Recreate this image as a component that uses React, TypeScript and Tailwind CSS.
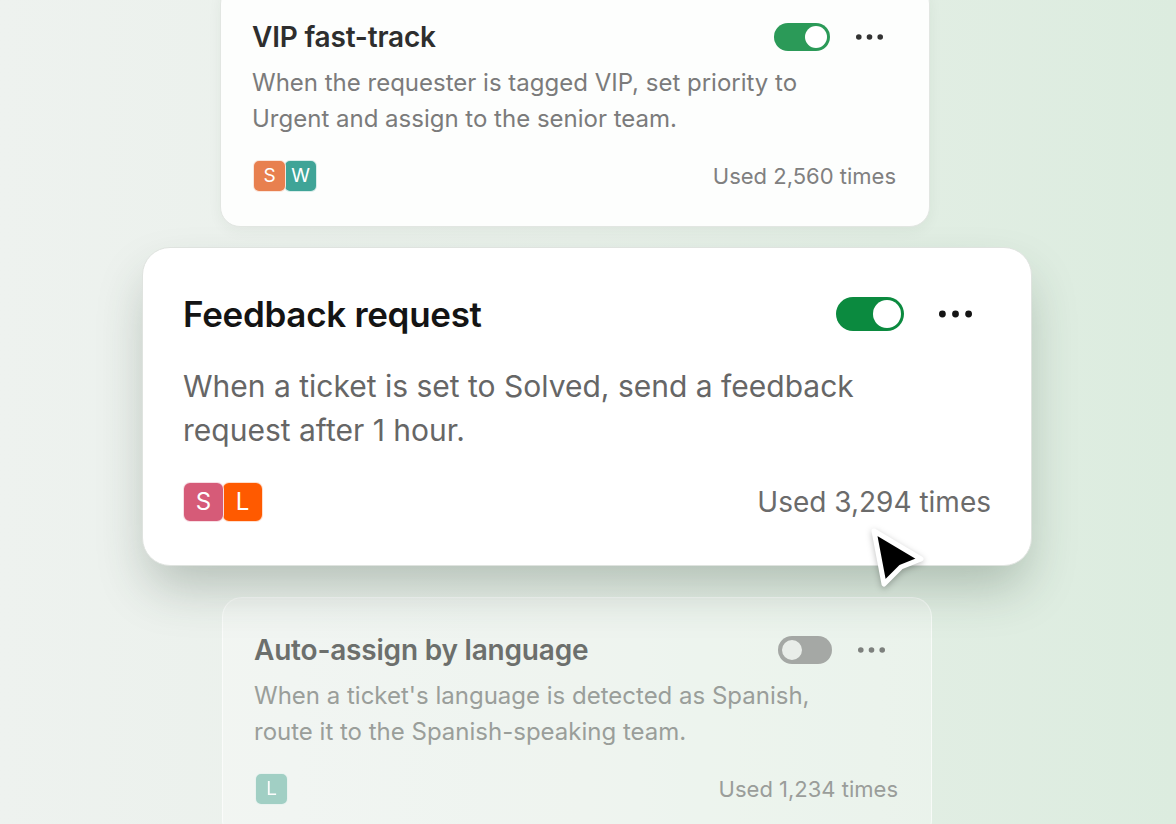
import React from 'react';

type Avatar = { letter: string; color: string };

type Rule = {
      title: string;
      description: string;
      avatars: Avatar[];
      uses: string;
      enabled: boolean;
};

const rules: Record<'vip' | 'feedback' | 'language', Rule> = {
      vip: {
            title: 'VIP fast-track',
            description: 'When the requester is tagged VIP, set priority to Urgent and assign to the senior team.',
            avatars: [
                  { letter: 'S', color: 'bg-[#e8804f]' },
                  { letter: 'W', color: 'bg-[#3fa497]' },
            ],
            uses: 'Used 2,560 times',
            enabled: true,
      },
      feedback: {
            title: 'Feedback request',
            description: 'When a ticket is set to Solved, send a feedback request after 1 hour.',
            avatars: [
                  { letter: 'S', color: 'bg-[#d65b78]' },
                  { letter: 'L', color: 'bg-[#ff5a00]' },
            ],
            uses: 'Used 3,294 times',
            enabled: true,
      },
      language: {
            title: 'Auto-assign by language',
            description: "When a ticket's language is detected as Spanish, route it to the Spanish-speaking team.",
            avatars: [{ letter: 'L', color: 'bg-[#80bfb1]' }],
            uses: 'Used 1,234 times',
            enabled: false,
      },
};

function Dots({ className, size }: { className: string; size: 'sm' | 'lg' }) {
      const w = size === 'lg' ? 33 : 27;
      const r = size === 'lg' ? 3.4 : 2.8;
      return (
            <svg width={w} height={10} viewBox={`0 0 ${w} 10`} className={className}>
                  <circle cx={r} cy={5} r={r} fill="currentColor" />
                  <circle cx={w / 2} cy={5} r={r} fill="currentColor" />
                  <circle cx={w - r} cy={5} r={r} fill="currentColor" />
            </svg>
      );
}

// Compact card used for the rules above and below the focused one
function SmallCard({ rule, muted }: { rule: Rule; muted?: boolean }) {
      return (
            <div
                  className={
                        muted
                              ? 'rounded-[20px] border border-white/60 bg-white/30 pl-[31px] pr-[33px] pt-[34px] pb-[34px]'
                              : 'rounded-[20px] border border-[#e2e6e2] bg-[#fdfefd] pl-[31px] pr-[33px] pt-[34px] pb-[34px] shadow-[0_4px_14px_rgba(40,60,45,0.05)]'
                  }
            >
                  <div className="flex h-[36px] items-center">
                        <h3
                              className={`flex-1 text-[28px] leading-[36px] font-semibold tracking-[-0.2px] ${muted ? 'text-[#6c6f6c]' : 'text-[#2e2e2e]'}`}
                        >
                              {rule.title}
                        </h3>
                        {rule.enabled ? (
                              <div className="flex h-[28px] w-[56px] items-center justify-end rounded-full bg-[#2b9a58] px-[3px]">
                                    <div className="h-[22px] w-[22px] rounded-full bg-white" />
                              </div>
                        ) : (
                              <div className="flex h-[28px] w-[54px] items-center justify-start rounded-full bg-[#a5a8a5] px-[2px]">
                                    <div className="h-[24px] w-[24px] rounded-full border-[2px] border-[#a5a8a5] bg-[#e9ede9]" />
                              </div>
                        )}
                        <Dots size="sm" className={`ml-[26px] mr-[13px] ${muted ? 'text-[#7d807d]' : 'text-[#333333]'}`} />
                  </div>
                  <p
                        className={`mt-[10px] w-[580px] text-[24px] leading-[36px] ${muted ? 'text-[#9a9e9a]' : 'text-[#7b7b7b]'}`}
                  >
                        {rule.description}
                  </p>
                  <div className="mt-[23px] flex h-[32px] items-center justify-between">
                        <div className={`ml-[1px] flex ${muted ? 'opacity-70' : ''}`}>
                              {rule.avatars.map((a, i) => (
                                    <div
                                          key={a.letter}
                                          className={`flex h-[32px] w-[33px] items-center justify-center rounded-[6px] border border-white/80 text-[19px] text-white ${a.color} ${i > 0 ? '-ml-[2px]' : 'relative z-10'}`}
                                    >
                                          {a.letter}
                                    </div>
                              ))}
                        </div>
                        <span className={`text-[22px] ${muted ? 'text-[#9a9d9a]' : 'text-[#808080]'}`}>{rule.uses}</span>
                  </div>
            </div>
      );
}

// Focused card, drawn larger and lifted above the others
function FocusCard({ rule }: { rule: Rule }) {
      return (
            <div className="relative rounded-[28px] border border-[#dfe3df] bg-white pl-[40px] pr-[40px] pt-[44px] pb-[43px] shadow-[0_26px_50px_-6px_rgba(40,65,48,0.28)]">
                  <div className="flex h-[44px] items-center">
                        <h2 className="flex-1 text-[35px] leading-[44px] font-semibold tracking-[-0.3px] text-[#141414]">
                              {rule.title}
                        </h2>
                        <div className="flex h-[34px] w-[68px] items-center justify-end rounded-full bg-[#0b8a3f] px-[3px]">
                              <div className="h-[28px] w-[28px] rounded-full bg-white" />
                        </div>
                        <Dots size="lg" className="ml-[35px] mr-[19px] text-[#141414]" />
                  </div>
                  <p className="mt-[28px] w-[720px] text-[30px] leading-[44px] text-[#666666]">{rule.description}</p>
                  <div className="mt-[30px] flex h-[40px] items-center justify-between">
                        <div className="flex">
                              {rule.avatars.map((a, i) => (
                                    <div
                                          key={a.letter}
                                          className={`flex h-[40px] w-[41px] items-center justify-center rounded-[7px] border border-white/80 text-[24px] text-white ${a.color} ${i > 0 ? '-ml-[2px]' : 'relative z-10'}`}
                                    >
                                          {a.letter}
                                    </div>
                              ))}
                        </div>
                        <span className="text-[28px] text-[#6b6b6b]">{rule.uses}</span>
                  </div>
            </div>
      );
}

function Cursor() {
      return (
            <svg
                  width={72}
                  height={76}
                  viewBox="0 0 72 76"
                  className="absolute left-[861px] top-[519px] z-30 drop-shadow-[0_2px_3px_rgba(0,0,0,0.25)]"
            >
                  <path
                        d="M13 12 L60 40 L40 48 L23 65 Z"
                        fill="#000"
                        stroke="#fff"
                        strokeWidth={5}
                        strokeLinejoin="round"
                  />
            </svg>
      );
}

export default function App() {
      return (
            <div
                  className="relative h-[824px] w-[1176px] overflow-hidden bg-gradient-to-r from-[#eef2ef] via-[#e8f0e9] to-[#dcecdf]"
                  style={{ fontFamily: 'Inter, "Noto Sans", sans-serif' }}
            >
                  <div className="flex flex-col">
                        <div className="-mt-[16px] ml-[220px] w-[710px]">
                              <SmallCard rule={rules.vip} />
                        </div>
                        <div className="relative z-20 mt-[20px] ml-[142px] w-[890px]">
                              <FocusCard rule={rules.feedback} />
                        </div>
                        <div className="mt-[31px] ml-[222px] w-[710px]">
                              <SmallCard rule={rules.language} muted />
                        </div>
                  </div>
                  <Cursor />
            </div>
      );
}
